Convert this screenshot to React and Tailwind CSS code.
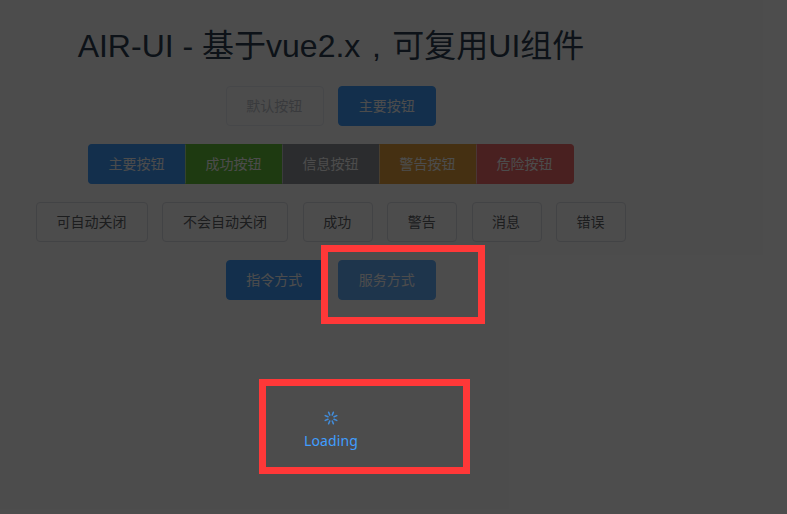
const base =
  'flex h-10 items-center justify-center border pr-px text-sm whitespace-nowrap';

const tones = {
  plain: 'border-[#dcdfe6] bg-white text-[#606266]',
  disabled: 'border-[#ebeef5] bg-white text-[#c0c4cc]',
  primary: 'border-[#409eff] bg-[#409eff] text-white',
  hover: 'border-[#66b1ff] bg-[#66b1ff] text-white',
};

function Button({ tone = 'plain', width = 'w-[98px]', children }) {
  return (
    <button className={`${base} ${tones[tone]} ${width} rounded`}>{children}</button>
  );
}

function Row({ children }) {
  return <div className="flex h-10 justify-center gap-[14.4px]">{children}</div>;
}

function Spinner() {
  return (
    <svg width="14" height="14" viewBox="0 0 14 14" stroke="#409eff" strokeOpacity="0.8" strokeWidth="1.6" strokeLinecap="round">
      {[22.5, 67.5, 112.5, 157.5, 202.5, 247.5, 292.5, 337.5].map((a) => (
        <path key={a} d="M7 0.8V3.7" transform={`rotate(${a} 7 7)`} />
      ))}
    </svg>
  );
}

export default function App() {
  return (
    <div className="relative h-[514px] w-[787px] overflow-hidden bg-white font-['Liberation_Sans','Noto_Sans_CJK_SC',sans-serif]">
      <main className="flex w-[662px] flex-col gap-[18px] pt-[24px]">
        <h1 className="flex h-11 items-center justify-center text-[32px] whitespace-nowrap text-[#2c3e50]">
          <span className="whitespace-pre">AIR-UI - 基于vue2.x</span>
          <span className="w-8 text-center">,</span>
          <span>可复用UI组件</span>
        </h1>
        <Row>
          <Button tone="disabled">默认按钮</Button>
          <Button tone="primary">主要按钮</Button>
        </Row>
        <div className="flex h-10 justify-center">
          <button className={`${base} w-[98px] rounded-l border-[#409eff] border-r-[#9fceff] bg-[#409eff] text-white`}>主要按钮</button>
          <button className={`${base} -ml-px w-[98px] border-[#67c23a] border-x-[#b3e09c] bg-[#67c23a] text-white`}>成功按钮</button>
          <button className={`${base} -ml-px w-[98px] border-[#909399] border-x-[#c7c9cc] bg-[#909399] text-white`}>信息按钮</button>
          <button className={`${base} -ml-px w-[98px] border-[#e6a23c] border-x-[#f2d09d] bg-[#e6a23c] text-white`}>警告按钮</button>
          <button className={`${base} -ml-px w-[98px] rounded-r border-[#f56c6c] border-l-[#fab5b5] bg-[#f56c6c] text-white`}>危险按钮</button>
        </div>
        <Row>
          <Button width="w-[112px]">可自动关闭</Button>
          <Button width="w-[126px]">不会自动关闭</Button>
          <Button width="w-[70px]">成功</Button>
          <Button width="w-[70px]">警告</Button>
          <Button width="w-[70px]">消息</Button>
          <Button width="w-[70px]">错误</Button>
        </Row>
        <Row>
          <Button tone="primary">指令方式</Button>
          <Button tone="hover">服务方式</Button>
        </Row>
      </main>

      <div className="absolute inset-0 bg-black/70">
        <div className="flex w-[662px] flex-col items-center pt-[411px]">
          <Spinner />
          <p className="mt-[5px] font-['Noto_Sans',sans-serif] text-sm leading-[21px] tracking-[0.15px] text-[#409eff]">Loading</p>
        </div>
      </div>
      <div className="absolute top-[245px] left-[321px] h-[79px] w-[164px] border-[7px] border-[#ff3838]" />
      <div className="absolute top-[379px] left-[259px] h-[95px] w-[211px] border-[7px] border-[#ff3838]" />
    </div>
  );
}
